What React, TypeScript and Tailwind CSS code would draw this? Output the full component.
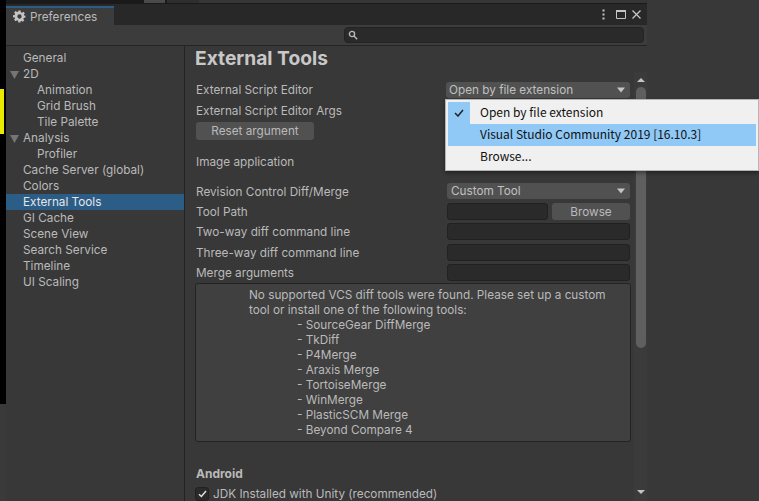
import { FC, ReactNode } from "react";

const sidebarItems = [
  { label: "General", indent: 0 },
  { label: "2D", indent: 0, open: true },
  { label: "Animation", indent: 1 },
  { label: "Grid Brush", indent: 1 },
  { label: "Tile Palette", indent: 1 },
  { label: "Analysis", indent: 0, open: true },
  { label: "Profiler", indent: 1 },
  { label: "Cache Server (global)", indent: 0 },
  { label: "Colors", indent: 0 },
  { label: "External Tools", indent: 0, active: true },
  { label: "GI Cache", indent: 0 },
  { label: "Scene View", indent: 0 },
  { label: "Search Service", indent: 0 },
  { label: "Timeline", indent: 0 },
  { label: "UI Scaling", indent: 0 },
];

const diffTools = [
  "SourceGear DiffMerge",
  "TkDiff",
  "P4Merge",
  "Araxis Merge",
  "TortoiseMerge",
  "WinMerge",
  "PlasticSCM Merge",
  "Beyond Compare 4",
];

const Arrow: FC = () => (
  <svg width="10" height="6" viewBox="0 0 10 6" className="shrink-0">
    <path d="M1 0.5h8L5 5.5z" fill="#c4c4c4" />
  </svg>
);

const Dropdown: FC<{ label: string; className: string }> = ({ label, className }) => (
  <div className={`flex h-[16px] items-center justify-between rounded-[3px] bg-[#515151] pr-[4px] text-[#c0c0c0] ${className}`}>
    <span>{label}</span>
    <Arrow />
  </div>
);

const Input: FC<{ className?: string }> = ({ className = "w-[183px]" }) => (
  <div className={`h-[17px] rounded-[3px] border border-[#212121] bg-[#2a2a2a] ${className}`} />
);

const Row: FC<{ label: string; className?: string; low?: boolean; children?: ReactNode }> = ({ label, className = "", low, children }) => (
  <div className={`flex justify-between ${low ? "items-start" : "items-center"} ${className}`}>
    <span className={low ? "pt-[1px]" : ""}>{label}</span>
    {children}
  </div>
);

export default function App() {
  return (
    <div className="relative flex h-[501px] w-[759px] overflow-hidden bg-[#383838] text-[11.75px] leading-[16px] text-[#bababa] [font-family:Inter,'Noto_Sans',sans-serif]">
      {/* whatever is behind the window on the left */}
      <div className="flex w-[6px] shrink-0 flex-col bg-black">
        <div className="mt-[89px] h-[45px] w-[4px] bg-[#eaea00]" />
        <div className="mt-[270px] flex-1 bg-[#3a3a3a]" />
      </div>

      <div className="flex w-[641px] shrink-0 flex-col">
        <div className="flex h-[4px] shrink-0 bg-[#1a1a1a]">
          <div className="ml-[138px] h-[3px] w-[21px] bg-[#4a4a4a]" />
          <div className="ml-[2px] h-[3px] w-[32px] bg-[#2e2e2e]" />
          <div className="h-[3px] flex-1 bg-[#363636]" />
        </div>

        {/* tab bar */}
        <div className="flex h-[21px] shrink-0 items-stretch bg-[#282828]">
          <div className="mt-[2px] flex w-[108px] items-center gap-[4px] border-t-2 border-[#2c5d87] bg-[#3c3c3c] pl-[7px]">
            <svg width="13" height="13" viewBox="0 0 24 24" fill="#c4c4c4">
              <path fillRule="evenodd" d="M10 1h4l.6 3.1 1.9.8 2.6-1.8 2.8 2.8-1.8 2.6.8 1.9L23 10v4l-3.1.6-.8 1.9 1.8 2.6-2.8 2.8-2.6-1.8-1.9.8L13.9 23h-4l-.6-3.1-1.9-.8-2.6 1.8-2.8-2.8 1.8-2.6-.8-1.9L0 13.9v-4l3.1-.6.8-1.9L2.1 4.8l2.8-2.8 2.6 1.8 1.9-.8zM12 8a4 4 0 1 0 0 8 4 4 0 0 0 0-8z" />
            </svg>
            <span>Preferences</span>
          </div>
          <div className="ml-auto flex items-center text-[#c4c4c4]">
            <svg width="3" height="11" viewBox="0 0 3 11" fill="#c4c4c4">
              <rect x="0.5" y="0.5" width="2" height="2" />
              <rect x="0.5" y="4.5" width="2" height="2" />
              <rect x="0.5" y="8.5" width="2" height="2" />
            </svg>
            <svg width="10" height="9" viewBox="0 0 10 9" fill="none" stroke="#c4c4c4" className="ml-[11px]">
              <path d="M.5 1.5h9v7h-9z" />
              <path d="M0 1h10" strokeWidth="2" />
            </svg>
            <svg width="9" height="9" viewBox="0 0 9 9" fill="none" stroke="#c4c4c4" strokeWidth="1.3" className="ml-[6px] mr-[6px]">
              <path d="M.5.5l8 8M8.5.5l-8 8" />
            </svg>
          </div>
        </div>

        {/* search toolbar */}
        <div className="flex h-[21px] shrink-0 justify-end border-b border-[#242424] bg-[#3c3c3c] pr-[3px] pt-[2px]">
          <div className="flex h-[16px] w-[300px] items-center rounded-[4px] border border-[#232323] bg-[#2a2a2a] pl-[3px]">
            <svg width="10" height="10" viewBox="0 0 10 10" fill="none" stroke="#b8b8b8" strokeWidth="1.4">
              <circle cx="4" cy="4" r="2.6" />
              <path d="M6 6l3.2 3.2" />
            </svg>
          </div>
        </div>

        <div className="flex min-h-0 flex-1 bg-[#383838]">
          <div className="w-[179px] shrink-0 border-r border-[#232323] pt-[4px]">
            {sidebarItems.map((item) => (
              <div
                key={item.label}
                className={`relative h-[16px] whitespace-nowrap ${item.indent ? "pl-[31px]" : "pl-[17px]"} ${item.active ? "bg-[#2c5d87] text-[#e6e6e6]" : ""}`}
              >
                {item.open && (
                  <svg width="9" height="8" viewBox="0 0 9 8" className="absolute left-[4px] top-[5px]">
                    <path d="M0 0h9L4.5 8z" fill="#757575" />
                  </svg>
                )}
                {item.label}
              </div>
            ))}
          </div>

          <div className="flex min-w-0 flex-1">
            <div className="w-[449px] shrink-0 pl-[10px]">
              <div className="h-[24px] whitespace-nowrap text-[19.2px] font-bold leading-[24px] text-[#c8c8c8]">External Tools</div>
              <div className="ml-[1px] w-[434px]">
                <Row label="External Script Editor" className="mt-[12px] h-[16px]">
                  <Dropdown label="Open by file extension" className="w-[184px] pl-[3px]" />
                </Row>
                <Row label="External Script Editor Args" className="mt-[5px] h-[16px]" />
                <div className="mt-[3px] flex h-[18px] w-[118px] items-center justify-center rounded-[3px] bg-[#515151]">Reset argument</div>
                <Row label="Image application" className="mt-[14px] h-[16px]" />
                <Row label="Revision Control Diff/Merge" low className="mt-[13px] h-[16px]">
                  <Dropdown label="Custom Tool" className="w-[183px] pl-[4px]" />
                </Row>
                <Row label="Tool Path" low className="mt-[4px] h-[17px]">
                  <div className="flex w-[183px] justify-between">
                    <Input className="w-[101px]" />
                    <div className="flex h-[17px] w-[78px] items-center justify-center rounded-[3px] bg-[#515151]">Browse</div>
                  </div>
                </Row>
                <Row label="Two-way diff command line" low className="mt-[3px] h-[17px]"><Input /></Row>
                <Row label="Three-way diff command line" low className="mt-[4px] h-[17px]"><Input /></Row>
                <Row label="Merge arguments" low className="mt-[3px] h-[17px]"><Input /></Row>
              </div>
              <div className="mt-[2px] h-[159px] w-[436px] rounded-[3px] border border-[#232323] bg-[#404040] pl-[53px] pt-[4px] leading-[15px]">
                <div>No supported VCS diff tools were found. Please set up a custom</div>
                <div>tool or install one of the following tools:</div>
                {diffTools.map((tool) => (
                  <div key={tool} className="pl-[48px]">- {tool}</div>
                ))}
              </div>
              <div className="ml-[1px] mt-[24px] h-[16px] text-[12px] font-bold">Android</div>
              <div className="mt-[4px] flex items-center gap-[4px]">
                <div className="flex h-[14px] w-[14px] items-center justify-center rounded-[3px] border border-[#212121] bg-[#2a2a2a]">
                  <svg width="9" height="8" viewBox="0 0 9 8" fill="none" stroke="#e0e0e0" strokeWidth="1.5">
                    <path d="M1 4.2l2.4 2.3L8 1" />
                  </svg>
                </div>
                <span>JDK Installed with Unity (recommended)</span>
              </div>
            </div>
            {/* scrollbar */}
            <div className="mt-[26px] flex w-[13px] shrink-0 flex-col items-center bg-[#3b3b3b]">
              <div className="mt-[6px] h-0 w-0 border-x-[4px] border-b-[4px] border-x-transparent border-b-[#c4c4c4]" />
              <div className="mt-[5px] h-[261px] w-[10px] rounded-[5px] bg-[#5f5f5f]" />
              <div className="mb-[7px] mt-auto h-0 w-0 border-x-[4px] border-t-[4px] border-x-transparent border-t-[#c4c4c4]" />
            </div>
          </div>
        </div>
      </div>

      {/* popup menu of the script editor dropdown */}
      <div className="absolute left-[445px] top-[99px] h-[72px] w-[314px] border border-[#b4b4b4] bg-[#f0f0f0] p-[2px] text-[12px] text-[#111] shadow-[0_2px_4px_rgba(0,0,0,0.4)] [font-family:'Noto_Sans_CJK_KR','Noto_Sans',sans-serif]">
        <div className="flex h-[22px] items-center">
          <div className="flex h-[22px] w-[22px] items-center justify-center bg-[#90c8f6]">
            <svg width="10" height="8" viewBox="0 0 10 8" fill="none" stroke="#222" strokeWidth="1.5">
              <path d="M1 4l3 3 5-6" />
            </svg>
          </div>
          <span className="ml-[10px] pb-[2px]">Open by file extension</span>
        </div>
        <div className="flex h-[22px] items-center bg-[#90c8f6] pb-[2px] pl-[32px]">Visual Studio Community 2019 [16.10.3]</div>
        <div className="flex h-[22px] items-center pb-[2px] pl-[32px]">Browse...</div>
      </div>
    </div>
  );
}
